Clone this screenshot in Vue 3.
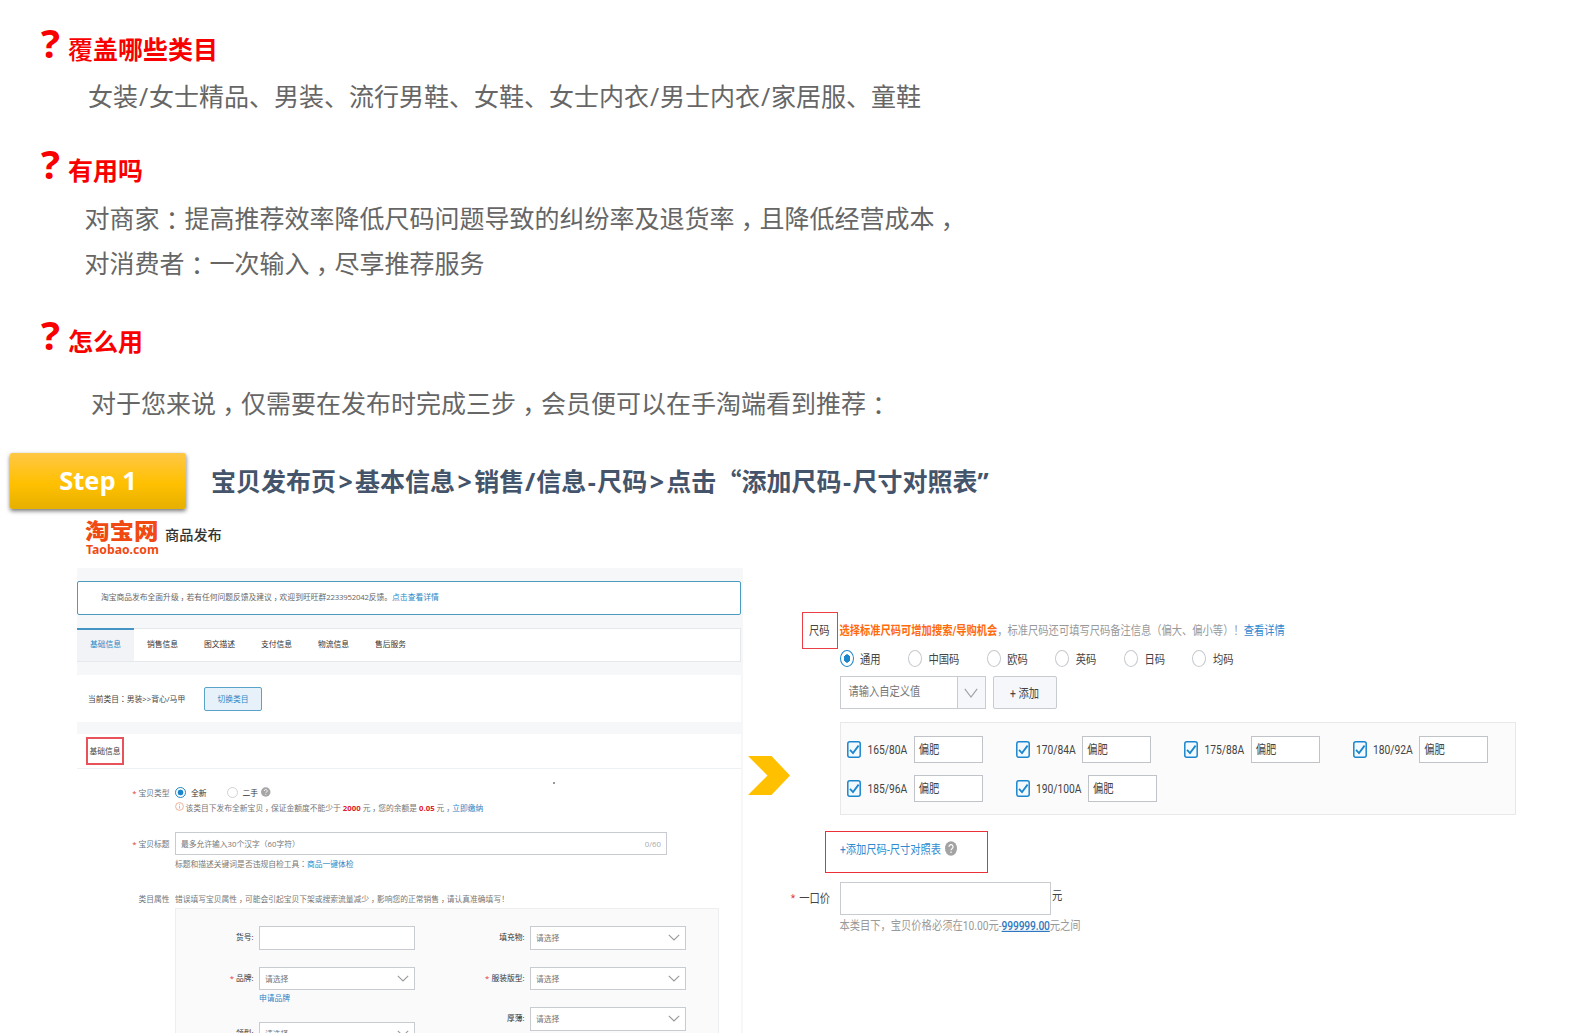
<template>
  <main class="page">
    <section class="intro">
      <h2 class="question q1"><span class="mark">?</span><span class="light">覆</span>盖哪些类目</h2>
      <p class="answer a1">女装<i class="slash">/</i>女士精品、男装、流行男鞋、女鞋、女士内衣<i class="slash">/</i>男士内衣<i class="slash">/</i>家居服、童鞋</p>
      <h2 class="question q2"><span class="mark">?</span>有用吗</h2>
      <p class="answer a2">对商家<span class="colon">：</span>提高推荐效率降低尺码问题导致的纠纷率及退货率<span class="comma">，</span>且降低经营成本<span class="comma">，</span></p>
      <p class="answer a3">对消费者<span class="colon">：</span>一次输入<span class="comma">，</span>尽享推荐服务</p>
      <h2 class="question q3"><span class="mark">?</span>怎么用</h2>
      <p class="answer a4">对于您来说<span class="comma">，</span>仅需要在发布时完成三步<span class="comma">，</span>会员便可以在手淘端看到推荐<span class="colon">：</span></p>
    </section>

    <section class="step">
      <div class="step-badge">Step 1</div>
      <h3 class="step-title">
        宝贝发布页<i class="gt">&gt;</i>基本信息<i class="gt">&gt;</i>销售<i class="slash">/</i>信息<i class="dash">-</i>尺码<i class="gt">&gt;</i>点击<span class="open-quote">“</span>添加尺码<i class="dash">-</i>尺寸对照表”
      </h3>
    </section>

    <div class="demo">
      <section class="publish">
        <header class="brand">
          <div class="logo">
            <b class="logo-cn">淘宝网</b>
            <b class="logo-en">Taobao.com</b>
          </div>
          <span class="brand-title">商品发布</span>
        </header>

        <div class="shell">
          <div class="notice">淘宝商品发布全面升级<span class="comma">，</span>若有任何问题反馈及建议<span class="comma">，</span>欢迎到旺旺群<span class="num">2233952042</span>反馈。<a>点击查看详情</a></div>

          <nav class="tabs">
            <span v-for="(tab, i) in tabs" :key="tab" class="tab" :class="{ active: i === 0 }">{{ tab }}</span>
          </nav>

          <div class="category">
            <span class="category-path">当前类目<span class="colon">：</span>男装&gt;&gt;背心/马甲</span>
            <button class="switch-btn">切换类目</button>
          </div>

          <div class="base">
            <div class="base-head"><span class="red-frame">基础信息</span></div>

            <div class="form">
              <span class="speck"></span>
              <div class="row row-type">
                <label class="label"><em>*</em>宝贝类型</label>
                <span class="radio on"></span><span class="dark">全新</span>
                <span class="radio second"></span><span class="dark">二手</span>
                <svg class="help" viewBox="0 0 12 12">
                  <circle cx="6" cy="6" r="6" fill="#a6a6a6"/>
                  <path d="M4.2 4.7a1.8 1.8 0 1 1 2.7 1.5c-.6.4-.9.6-.9 1.2M6 8.5v1.1" fill="none" stroke="#fff" stroke-width="1.1"/>
                </svg>
              </div>
              <div class="row row-tip">
                <svg class="info" viewBox="0 0 12 12" fill="none" stroke="#e69a7c">
                  <circle cx="6" cy="6" r="5.2"/>
                  <path d="M6 5v4M6 2.8v1.1"/>
                </svg>
                该类目下发布全新宝贝<span class="comma">，</span>保证金额度不能少于&nbsp;<strong>2000</strong>&nbsp;元<span class="comma">，</span>您的余额是&nbsp;<strong>0.05</strong>&nbsp;元<span class="comma">，</span><a>立即缴纳</a>
              </div>
              <div class="row row-title">
                <label class="label"><em>*</em>宝贝标题</label>
                <div class="title-input"><span>最多允许输入30个汉字（60字符）</span><span class="count">0/60</span></div>
              </div>
              <div class="row row-check">标题和描述关键词是否违规自检工具<span class="colon">：</span><a>商品一键体检</a></div>
              <div class="row row-attr">
                <label class="label">类目属性</label>
                <span>错误填写宝贝属性<span class="comma">，</span>可能会引起宝贝下架或搜索流量减少<span class="comma">，</span>影响您的正常销售<span class="comma">，</span>请认真准确填写！</span>
              </div>

              <div class="attrs">
                <div v-for="(col, c) in attrs" :key="c" class="attr-col">
                  <div v-for="item in col" :key="item.name" class="attr">
                    <label class="attr-label"><em v-if="item.required">*</em>{{ item.name }}:</label>
                    <div class="attr-field">
                      <div class="select">
                        <template v-if="item.select">
                          <span>请选择</span>
                          <svg viewBox="0 0 12 7" fill="none" stroke="#999" stroke-width="1.1">
                            <path d="M.8.8 6 6 11.2.8"/>
                          </svg>
                        </template>
                      </div>
                      <a v-if="item.link" class="attr-link">{{ item.link }}</a>
                    </div>
                  </div>
                </div>
              </div>
            </div>
          </div>
        </div>
      </section>

      <svg class="arrow" viewBox="0 0 42 39">
        <path d="M0 0h23.5L42 19.5 23.5 39H0l19.5-19.5z" fill="#ffc000"/>
      </svg>

      <section class="sizes">
        <div class="size-head">
          <span class="size-label"><span class="tall">尺码</span></span>
          <p class="size-hint tall"><b>选择标准尺码可增加搜索/导购机会</b>，标准尺码还可填写尺码备注信息（偏大、偏小等）！<a>查看详情</a></p>
        </div>

        <div class="size-body">
          <div class="size-types">
            <span v-for="(type, i) in sizeTypes" :key="type" class="size-type">
              <span class="oval" :class="{ on: i === 0 }"></span><span class="tall">{{ type }}</span>
            </span>
          </div>

          <div class="custom">
            <div class="custom-select">
              <span class="custom-text"><span class="tall">请输入自定义值</span></span>
              <span class="custom-arrow">
                <svg viewBox="0 0 14 10" fill="none" stroke="#a0a4aa" stroke-width="1.2">
                  <path d="M.8.8 7 9 13.2.8"/>
                </svg>
              </span>
            </div>
            <button class="add-btn"><span class="tall">+ 添加</span></button>
          </div>

          <div class="size-list">
            <div v-for="size in sizes" :key="size" class="size-item">
              <svg class="check" viewBox="0 0 14 17" fill="none">
                <rect x=".8" y=".8" width="12.4" height="15.4" rx="2" fill="#f2faff" stroke="#1c86cd" stroke-width="1.5"/>
                <path d="M3 8.8 6 12l5.6-7.4" stroke="#1c86cd" stroke-width="1.8"/>
              </svg>
              <span class="tall size-name">{{ size }}</span>
              <div class="size-input"><span class="tall">偏肥</span></div>
            </div>
          </div>
        </div>

        <div class="compare">
          <a class="tall">+添加尺码-尺寸对照表</a>
          <svg viewBox="0 0 12 15">
            <ellipse cx="6" cy="7.5" rx="6" ry="7.3" fill="#a3a3a3"/>
            <path d="M4 5.8a2 2.2 0 1 1 3 1.9c-.7.5-1 .8-1 1.5M6 10.6v1.4" fill="none" stroke="#fff" stroke-width="1.2"/>
          </svg>
        </div>

        <div class="price">
          <label class="price-label"><em>*</em><span class="tall">一口价</span></label>
          <div class="price-input"></div>
          <span class="tall unit">元</span>
        </div>
        <p class="price-hint tall">本类目下，宝贝价格必须在10.00元-<b>999999.00</b>元之间</p>
      </section>
    </div>
  </main>
</template>

<script setup>
const tabs = ['基础信息', '销售信息', '图文描述', '支付信息', '物流信息', '售后服务'];

const attrs = [
  [
    { name: '货号' },
    { name: '品牌', required: true, select: true, link: '申请品牌' },
    { name: '领型', select: true },
  ],
  [
    { name: '填充物', select: true },
    { name: '服装版型', required: true, select: true },
    { name: '厚薄', select: true },
  ],
];

const sizeTypes = ['通用', '中国码', '欧码', '英码', '日码', '均码'];
const sizes = ['165/80A', '170/84A', '175/88A', '180/92A', '185/96A', '190/100A'];
</script>

<style>
body {
  margin: 0;
  background: #fff;
}
</style>

<style scoped>
.page, .page * {
  box-sizing: border-box;
}

.page {
  width: 1569px;
  height: 1033px;
  overflow: hidden;
  background: #fff;
  font-family: "Open Sans", "Noto Sans CJK SC", sans-serif;
  white-space: nowrap;
}

h2, h3, p {
  margin: 0;
}
i, em {
  font-style: normal;
}
button {
  font-family: inherit;
  padding: 0;
}

/* La ponctuation est centrée dans son cadratin */
.colon {
  font-family: "Noto Sans CJK JP", sans-serif;
  position: relative;
  top: 0.06em;
}
.comma {
  font-feature-settings: "halt";
  padding: 0 0.25em;
}

.intro {
  height: 453px;
  padding-top: 27px;
}
.question {
  height: 44px;
  line-height: 44px;
  padding-left: 41px;
  font-size: 25px;
  font-weight: 700;
  color: #f80000;
  display: flex;
}
.mark {
  width: 27px;
  font-size: 40px;
  line-height: 31px;
}
.light {
  font-weight: 500;
}
.answer {
  height: 44px;
  line-height: 44px;
  font-size: 25px;
  color: #666;
}
.answer i {
  display: inline-block;
  width: 11px;
  text-align: center;
}
.a1 { padding-left: 88px; margin-top: 3px; }
.q2 { margin-top: 30px; }
.a2 { padding-left: 84.5px; margin-top: 3px; }
.a3 { padding-left: 84.5px; margin-top: 1px; }
.q3 { margin-top: 35px; }
.a4 { padding-left: 91px; margin-top: 17px; }

.step {
  height: 56px;
  padding-left: 10px;
  display: flex;
}
.step-badge {
  width: 176px;
  height: 56px;
  border-radius: 2px;
  background: linear-gradient(#ffc746, #ffc000 55%, #e6b000);
  box-shadow: 0 2px 4px rgba(0, 0, 0, 0.55);
  color: #fff;
  font-size: 25.5px;
  font-weight: 700;
  line-height: 55px;
  text-align: center;
}
.step-title {
  margin-left: 25px;
  line-height: 55px;
  font-size: 25px;
  font-weight: 700;
  color: #44546a;
}
.step-title i {
  display: inline-block;
  text-align: center;
}
.step-title .gt { width: 19.1px; }
.step-title .slash { width: 12px; }
.step-title .dash { width: 11px; }
.open-quote {
  font-family: "Noto Sans CJK SC", sans-serif;
}

.demo {
  height: 524px;
  display: flex;
  align-items: flex-start;
}

.publish {
  width: 666px;
  margin-left: 77px;
  font-size: 7.78px;
  color: #777;
}
.publish a { color: #2b86c5; }

.brand {
  height: 59px;
  padding: 9px 0 0 8px;
  display: flex;
}
.logo {
  width: 80px;
  color: #f04a12;
}
.logo b {
  display: block;
}
.logo-cn {
  font-size: 24.5px;
  line-height: 26px;
  font-weight: 900;
  transform: scaleY(0.88);
}
.logo-en {
  font-size: 12.2px;
  line-height: 12px;
  padding-left: 1px;
  font-weight: 700;
  font-family: "Noto Sans", sans-serif;
}
.brand-title {
  font-size: 14.2px;
  line-height: 34px;
  font-weight: 500;
  color: #333;
}

.shell {
  height: 465px;
  background: #f6f7f8;
  padding: 13px 2px 0 0;
}
.notice {
  height: 34px;
  line-height: 31px;
  padding-left: 23px;
  border: 1px solid #4f9bc0;
  border-radius: 2px;
  background: #fff;
  color: #666;
}
.num {
  letter-spacing: -0.18px;
}

.tabs {
  height: 34px;
  margin-top: 13px;
  display: flex;
  background: #fff;
  border: 1px solid #e6e9ec;
  border-left: none;
}
.tab {
  width: 57px;
  line-height: 31px;
  text-align: center;
  color: #333;
}
.tab.active {
  height: 33px;
  margin-top: -1px;
  line-height: 29px;
  border-top: 2px solid #4494c4;
  background: #f1f3f6;
  color: #2b86c5;
}

.category {
  height: 47px;
  margin-top: 13px;
  padding-left: 11px;
  background: #fff;
  display: flex;
  align-items: center;
  color: #444;
}
.category-path {
  width: 116px;
}
.switch-btn {
  width: 58px;
  height: 24px;
  border: 1px solid #5aa2ca;
  border-radius: 2px;
  background: #e7f1fa;
  color: #2b86c5;
  font-size: 7.78px;
}

.base {
  height: 300px;
  margin-top: 12px;
  background: #fff;
}
.base-head {
  height: 35px;
  padding: 3px 0 0 9px;
  border-bottom: 1px solid #eef1f4;
}
.red-frame {
  display: block;
  width: 38px;
  height: 28px;
  line-height: 25px;
  padding-left: 1.5px;
  border: 2px solid #e8525a;
  color: #444;
}

.form {
  position: relative;
  padding-top: 16px;
}
.speck {
  position: absolute;
  left: 476px;
  top: 13px;
  width: 2px;
  height: 2px;
  background: #999;
}
.row {
  display: flex;
  align-items: center;
}
.label {
  width: 98px;
  padding-right: 5.5px;
  text-align: right;
  color: #6d7680;
}
em {
  margin-right: 2px;
  color: #e0393e;
}
.row-type {
  height: 15px;
  margin-bottom: 1px;
}
.radio {
  width: 11px;
  height: 11px;
  margin-right: 5px;
  border: 1px solid #d0d4d8;
  border-radius: 50%;
}
.radio.second {
  margin-left: 20px;
}
.radio.on {
  border-color: #1c86cd;
  background: radial-gradient(circle, #1c86cd 2.6px, #fff 3.2px);
}
.dark { color: #333; }
.help {
  width: 9.5px;
  height: 10px;
  margin-left: 3px;
  margin-top: -2px;
}
.row-tip {
  height: 13px;
  padding-left: 98px;
}
.info {
  width: 9px;
  height: 9px;
  margin: -2px 1.5px 0 0;
}
strong { color: #e0202c; }

.row-title {
  height: 23px;
  margin-top: 18px;
}
.title-input {
  width: 492px;
  height: 23px;
  padding: 0 5px;
  border: 1px solid #c8cbd0;
  display: flex;
  align-items: center;
  justify-content: space-between;
}
.count { color: #aaa; }
.row-check {
  height: 16px;
  padding-left: 98px;
}
.row-attr {
  height: 15px;
  margin: 20px 0 2px;
}

.attrs {
  width: 544px;
  height: 140px;
  margin-left: 98px;
  padding-top: 17px;
  border: 1px solid #eceeef;
  background: #fafafb;
  display: flex;
}
.attr-col {
  width: 271.5px;
}
.attr {
  display: flex;
  height: 40.5px;
}
.attr-col:first-child .attr:nth-child(2) {
  height: 55.5px;
}
.attr-label {
  width: 83px;
  padding-right: 5.5px;
  line-height: 23px;
  text-align: right;
  color: #333;
}
.select {
  width: 156px;
  height: 23.5px;
  padding: 0 5px;
  border: 1px solid #c8cbd0;
  background: #fff;
  display: flex;
  align-items: center;
  justify-content: space-between;
}
.select svg {
  width: 12px;
  height: 7px;
}
.attr-link {
  display: block;
  line-height: 16px;
}

.arrow {
  width: 42px;
  height: 39px;
  margin: 247px 0 0 5px;
  flex-shrink: 0;
}

/* Panneau des tailles : textes étirés en hauteur */
.sizes {
  width: 760px;
  padding-top: 103px;
  font-size: 10.28px;
  font-family: Roboto, "Noto Sans CJK SC", sans-serif;
  color: #444;
}
.sizes a { color: #2f8ad0; }
.tall {
  display: inline-block;
  transform: scaleY(1.2);
}

.size-head {
  display: flex;
  padding-left: 12px;
}
.size-label {
  width: 36px;
  height: 37px;
  border: 1.5px solid #ea3f45;
  line-height: 36px;
  padding-left: 6px;
}
.size-hint {
  margin-left: 1.5px;
  line-height: 37px;
  color: #999;
}
.size-hint b { color: #ff6a0c; }

.size-body {
  margin-left: 49.5px;
  padding-top: 1px;
}
.size-types {
  height: 17px;
  display: flex;
  gap: 27.5px;
  align-items: center;
}
.size-type {
  display: flex;
  align-items: center;
}
.oval {
  width: 14px;
  height: 17px;
  margin-right: 6.5px;
  border: 1px solid #c5c9cd;
  border-radius: 50%;
}
.oval.on {
  border: 1.5px solid #1c86cd;
  background: radial-gradient(ellipse 3.4px 4.2px, #1c86cd 95%, #fff);
}

.custom {
  display: flex;
  gap: 7px;
  margin-top: 9px;
}
.custom-select {
  width: 146px;
  height: 33px;
  border: 1.5px solid #c8cbd0;
  display: flex;
}
.custom-text {
  flex: 1;
  padding-left: 8px;
  line-height: 29px;
  color: #777;
}
.custom-arrow {
  width: 28px;
  border-left: 1px solid #c8cbd0;
  background: #f5f7fa;
  display: flex;
  align-items: center;
  justify-content: center;
}
.custom-arrow svg {
  width: 14px;
  height: 10px;
}
.add-btn {
  width: 64px;
  height: 33px;
  border: 1.5px solid #c8cbd0;
  border-radius: 2px;
  background: #f5f7fa;
  font-size: 10.28px;
  color: #444;
}

.size-list {
  width: 676px;
  height: 93px;
  margin-top: 13px;
  padding: 12.5px 0 0 6.5px;
  border: 1px solid #e8e8e8;
  background: #fbfbfb;
  display: grid;
  grid-template-columns: repeat(4, 168.5px);
  grid-auto-rows: 27px;
  row-gap: 12.5px;
}
.size-item {
  display: flex;
  align-items: center;
}
.check {
  width: 14px;
  height: 17px;
  margin-right: 6.5px;
}
.size-input {
  width: 69px;
  height: 27px;
  margin-left: 6.5px;
  padding-left: 4px;
  border: 1.5px solid #c0c3c7;
  background: #fff;
  line-height: 25px;
}

.compare {
  width: 163px;
  height: 42px;
  margin: 16px 0 0 35px;
  padding: 0 0 7px 14px;
  border: 1.5px solid #ec3038;
  display: flex;
  align-items: center;
}
.compare svg {
  width: 12px;
  height: 15px;
  margin: -1px 0 0 4px;
}

.price {
  display: flex;
  margin-top: 9px;
}
.price-label {
  width: 50px;
  padding-right: 10px;
  line-height: 33px;
  text-align: right;
}
.price-label em { margin-right: 4px; }
.price-input {
  width: 211px;
  height: 33px;
  border: 1.5px solid #c8cbd0;
}
.unit {
  margin-left: 1px;
  line-height: 29px;
}
.price-hint {
  display: block;
  margin-left: 49.5px;
  line-height: 22px;
  color: #999;
}
.price-hint b {
  font-weight: 500;
  letter-spacing: -0.15px;
  color: #2f78c0;
  text-decoration: underline;
}
</style>
